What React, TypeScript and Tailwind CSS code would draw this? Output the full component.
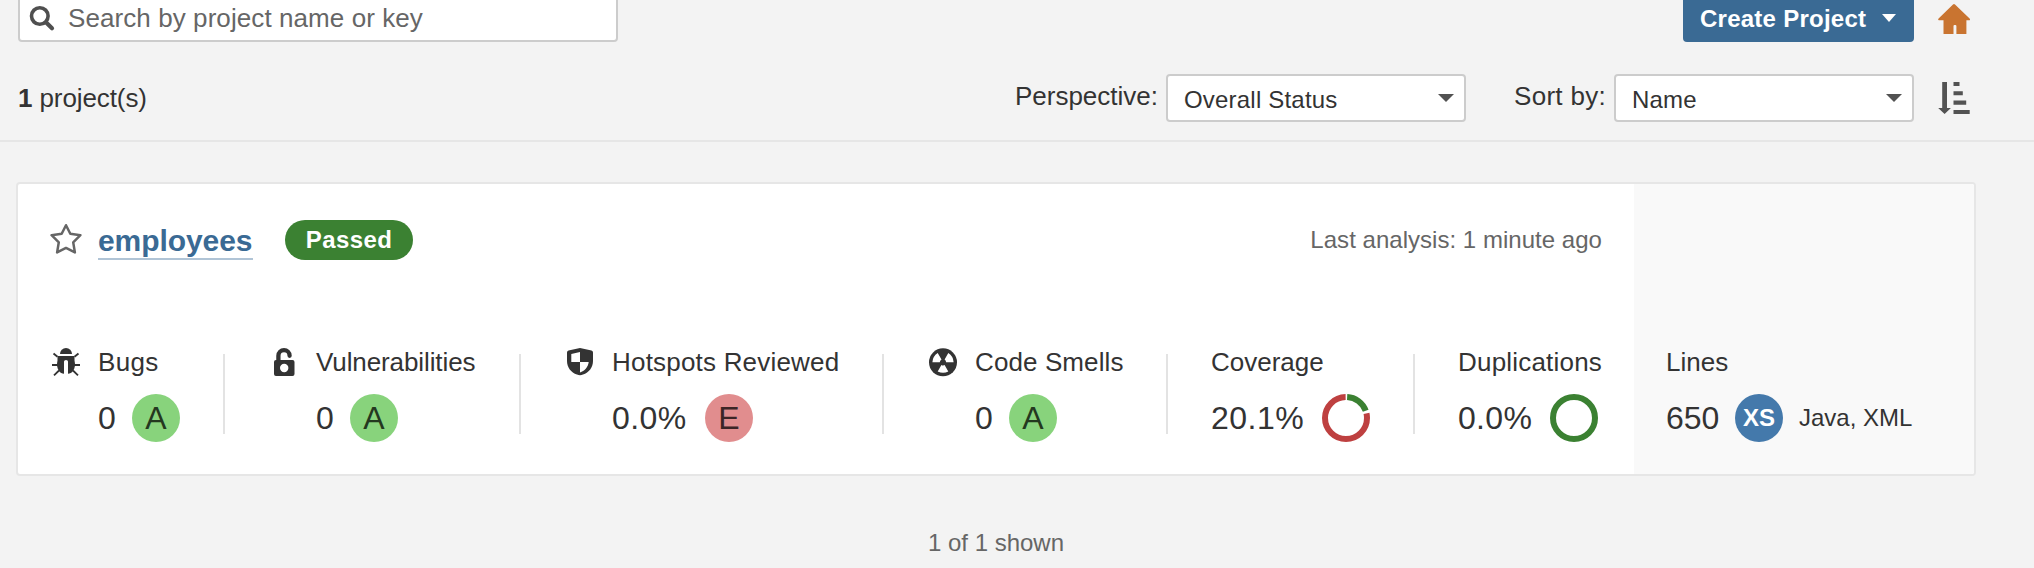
import type { ReactNode } from "react";

function SearchIcon() {
  return (
    <svg className="block size-7" viewBox="0 0 28 28" fill="none" stroke="#4f4f4f" strokeLinecap="round">
      <circle cx="11.8" cy="12" r="8.3" strokeWidth="3.6" />
      <path d="M18.2 18.6 24 24.3" strokeWidth="4.2" />
    </svg>
  );
}

function Caret({ className }: { className: string }) {
  return (
    <svg className={className} viewBox="0 0 16 8" fill="currentColor" preserveAspectRatio="none">
      <path d="M0 0h16L8 8z" />
    </svg>
  );
}

function HomeIcon() {
  return (
    <svg className="block size-8" viewBox="0 0 32 32" fill="#c97430">
      <path d="M15 2.500q1-1 2 0l14.600 14.100q1 1.200-.4 1.700h-2.800v13.300q0 1.800-1.800 1.800h-6.500q-1.700 0-1.700-1.700v-7.700q0-.9-1.100-.9h-.8q-1 0-1 .9v7.700q0 1.700-1.700 1.700h-6.500q-1.800 0-1.800-1.800V18.300H.9q-1.300-.5-.3-1.700z" />
    </svg>
  );
}

function SortIcon() {
  return (
    <svg className="block size-8" viewBox="0 0 32 32" fill="#525252">
      <path d="M4.200 0h4.800v26H12.900L6.600 32 .2 26h4zM15.500 0h6v4h-6zM15.500 9.200h9.300v4h-9.300zM15.500 18.600h12.700v4.200H15.500zM15.500 28h16.200v4H15.500z" />
    </svg>
  );
}

function StarIcon() {
  return (
    <svg className="block size-8" viewBox="0 0 32 32" fill="none" stroke="#666" strokeWidth="2.500" strokeLinejoin="round">
      <path d="M16 2.200 20.300 10.800 30.400 12.200 23.200 19.300 24.900 29.400 16 24.900 7.100 29.400 8.800 19.300 1.600 12.200 11.700 10.800z" />
    </svg>
  );
}

function BugIcon() {
  return (
    <svg className="block size-8" viewBox="0 0 32 32" fill="#333">
      <path d="M10 8a6 6 0 0 1 12 0z" />
      <path d="M7.500 10h17v4.500c1 4 .5 7.500-1.500 10.500-1.300 2-3 2.700-5 2.800V15.500q0-1.500-2-1.500t-2 1.500v12.300c-2-.1-3.700-.8-5-2.800-2-3-2.500-6.500-1.500-10.500z" />
      <path d="M3.500 7.500 7.500 10.800M28.500 7.500 24.500 10.800M2 19h6M30 19h-6M4 29.300 9 24.500M28 29.300 23 24.500" stroke="#333" strokeWidth="1.800" />
    </svg>
  );
}

function LockIcon() {
  return (
    <svg className="block size-8" viewBox="0 0 32 32">
      <path d="M10.400 15V9.800a5.600 5.600 0 0 1 11.200 0" fill="none" stroke="#333" strokeWidth="4.300" strokeLinecap="round" />
      <path fillRule="evenodd" fill="#333" d="M8 14h16.500a2 2 0 0 1 2 2v12a2 2 0 0 1-2 2H8a2 2 0 0 1-2-2V16a2 2 0 0 1 2-2zm8.200 3.800a4.200 4.200 0 1 0 0 8.400 4.200 4.200 0 0 0 0-8.400z" />
    </svg>
  );
}

function ShieldIcon() {
  return (
    <svg className="block size-8" viewBox="0 0 32 32">
      <path fillRule="evenodd" fill="#333" d="M16 2 27.500 4.500Q29 5 29 6.500V15C29 21.500 25 26.500 19 28.600Q16 30 13 28.600C7 26.500 3 21.500 3 15V6.500Q3 5 4.500 4.500zM16 6 7.300 8v8H16zM16 16v10.400C20.500 25 24 21.500 24.700 16z" />
    </svg>
  );
}

function SmellIcon() {
  return (
    <svg className="block size-8" viewBox="0 0 32 32">
      <circle cx="16" cy="16.300" r="14" fill="#333" />
      <g fill="#fff">
        <path d="M12.800 16.300H5.400Q5.600 10.500 10.700 7.100L14.500 13.600Q12.900 14.500 12.800 16.300z" />
        <path d="M12.800 16.300H5.400Q5.600 10.500 10.700 7.100L14.500 13.600Q12.900 14.500 12.800 16.300z" transform="rotate(120 16 16.300)" />
        <path d="M12.800 16.300H5.400Q5.600 10.500 10.700 7.100L14.500 13.600Q12.900 14.500 12.800 16.300z" transform="rotate(240 16 16.300)" />
      </g>
    </svg>
  );
}

function CoverageRing() {
  return (
    <svg className="block size-12" viewBox="0 0 48 48" fill="none" strokeWidth="6">
      <g transform="rotate(-90 24 24)">
        <circle cx="24" cy="24" r="21" stroke="#3b8132" strokeDasharray="24.200 200" strokeDashoffset="-1.200" />
        <circle cx="24" cy="24" r="21" stroke="#be4040" strokeDasharray="102.600 200" strokeDashoffset="-28.100" />
      </g>
    </svg>
  );
}

function DuplicationRing() {
  return (
    <svg className="block size-12" viewBox="0 0 48 48" fill="none">
      <circle cx="24" cy="24" r="21" stroke="#3b8132" strokeWidth="6" />
    </svg>
  );
}

function Rating({ letter, className }: { letter: string; className: string }) {
  return <span className={`block size-12 rounded-full text-center text-[32px] leading-12 ${className}`}>{letter}</span>;
}

function Measure({
  icon,
  label,
  labelClass = "",
  value,
  valueClass,
  children,
  className,
}: {
  icon?: ReactNode;
  label: string;
  labelClass?: string;
  value: string;
  valueClass: string;
  children: ReactNode;
  className: string;
}) {
  return (
    <div className={`flex shrink-0 ${className}`}>
      {icon && <div className="mr-4 shrink-0">{icon}</div>}
      <div>
        <div className={`text-[26px] leading-8 whitespace-nowrap ${labelClass}`}>{label}</div>
        <div className="mt-4 flex">
          <span className={`shrink-0 text-[32px] leading-12 whitespace-nowrap ${valueClass}`}>{value}</span>
          {children}
        </div>
      </div>
    </div>
  );
}

function Divider() {
  return <div className="mt-2 h-20 w-0.5 shrink-0 bg-[#e3e3e3]" />;
}

function Select({ value }: { value: string }) {
  return (
    <div className="flex h-12 w-[300px] items-center justify-between rounded-[4px] border-2 border-[#ccc] bg-white pr-[10px] pl-4">
      <span className="mt-[3px] text-[24px] leading-8 tracking-[0.2px]">{value}</span>
      <Caret className="block h-2 w-4 text-[#525252]" />
    </div>
  );
}

export default function App() {
  return (
    <div className="h-[568px] w-[2034px] overflow-hidden bg-[#f3f3f3] font-['Liberation_Sans',Arial,sans-serif] text-[#333]">
      <header className="flex h-[142px] flex-col border-b-2 border-[#e6e6e6] pr-16 pl-[18px]">
        <div className="-mt-1.5 flex h-12 shrink-0">
          <div className="flex w-[600px] items-center rounded-[4px] border-2 border-[#ccc] bg-white pl-2">
            <SearchIcon />
            <span className="ml-3 text-[26px] leading-8 tracking-[0.08px] text-[#666]">Search by project name or key</span>
          </div>
          <button className="ml-auto flex w-[231px] items-center rounded-[4px] bg-[#3a6a94] pl-[17px] text-[24px] leading-8 font-bold text-white">
            <span className="mt-px w-[166px] text-left tracking-[0.25px] whitespace-nowrap">Create Project</span>
            <Caret className="ml-4 block h-2 w-3.5" />
          </button>
          <div className="mt-2 ml-6">
            <HomeIcon />
          </div>
        </div>
        <div className="mt-8 flex h-12 shrink-0">
          <div className="mt-2 text-[26px] leading-8 tracking-[-0.1px]">
            <b>1</b> project(s)
          </div>
          <div className="ml-auto flex">
            <span className="mt-1.5 mr-2 text-[26px] leading-8">Perspective:</span>
            <Select value="Overall Status" />
          </div>
          <div className="ml-12 flex">
            <span className="mt-1.5 mr-2 text-[26px] leading-8 tracking-[0.3px]">Sort by:</span>
            <Select value="Name" />
          </div>
          <div className="mt-2 ml-6">
            <SortIcon />
          </div>
        </div>
      </header>

      <main className="pt-10">
        <article className="ml-4 flex h-[294px] w-[1960px] rounded-[4px] border-2 border-[#e6e6e6] bg-white">
          <div className="w-[1616px] pt-9">
            <div className="flex h-10 pr-8 pl-8">
              <div className="mt-[3px]">
                <StarIcon />
              </div>
              <a className="mt-0.5 ml-4 h-[38px] w-[155px] border-b-2 border-[#b0c4d6] text-[30px] leading-[38px] font-bold tracking-[-0.08px] text-[#3a6a94]">employees</a>
              <span className="ml-8 w-32 rounded-full bg-[#3b8132] text-center text-[24px] leading-10 font-bold tracking-[0.4px] text-white">Passed</span>
              <span className="ml-auto text-[24px] leading-10 tracking-[0.03px] text-[#666]">Last analysis: 1 minute ago</span>
            </div>
            <div className="mt-[86px] flex pl-8">
              <Measure icon={<BugIcon />} label="Bugs" labelClass="tracking-[0.3px]" value="0" valueClass="w-[34px]" className="w-[173px]">
                <Rating letter="A" className="bg-[#88d37c] text-[#24381f]" />
              </Measure>
              <Divider />
              <Measure icon={<LockIcon />} label="Vulnerabilities" labelClass="tracking-[-0.1px]" value="0" valueClass="w-[34px]" className="w-[294px] pl-[43px]">
                <Rating letter="A" className="bg-[#88d37c] text-[#24381f]" />
              </Measure>
              <Divider />
              <Measure icon={<ShieldIcon />} label="Hotspots Reviewed" labelClass="tracking-[0.2px]" value="0.0%" valueClass="w-[93px] tracking-[0.4px]" className="w-[361px] pl-[43px]">
                <Rating letter="E" className="bg-[#e18d8e] text-[#3c2526]" />
              </Measure>
              <Divider />
              <Measure icon={<SmellIcon />} label="Code Smells" labelClass="tracking-[0.1px]" value="0" valueClass="w-[34px]" className="w-[282px] pl-[43px]">
                <Rating letter="A" className="bg-[#88d37c] text-[#24381f]" />
              </Measure>
              <Divider />
              <Measure label="Coverage" value="20.1%" valueClass="w-[111px] tracking-[0.5px]" className="w-[245px] pl-[43px]">
                <CoverageRing />
              </Measure>
              <Divider />
              <Measure label="Duplications" labelClass="tracking-[0.2px]" value="0.0%" valueClass="w-[92px] tracking-[0.3px]" className="pl-[43px]">
                <DuplicationRing />
              </Measure>
            </div>
          </div>
          <div className="flex-1 rounded-r-[2px] bg-[#f9f9f9] pt-[162px] pl-8">
            <Measure label="Lines" value="650" valueClass="w-[69px]" className="">
              <span className="block size-12 rounded-full bg-[#4479ab] text-center text-[24px] leading-12 font-bold text-white">XS</span>
              <span className="ml-4 text-[24px] leading-12">Java, XML</span>
            </Measure>
          </div>
        </article>
        <footer className="mt-[51px] pr-[42px] text-center text-[24px] leading-8 text-[#666]">1 of 1 shown</footer>
      </main>
    </div>
  );
}
